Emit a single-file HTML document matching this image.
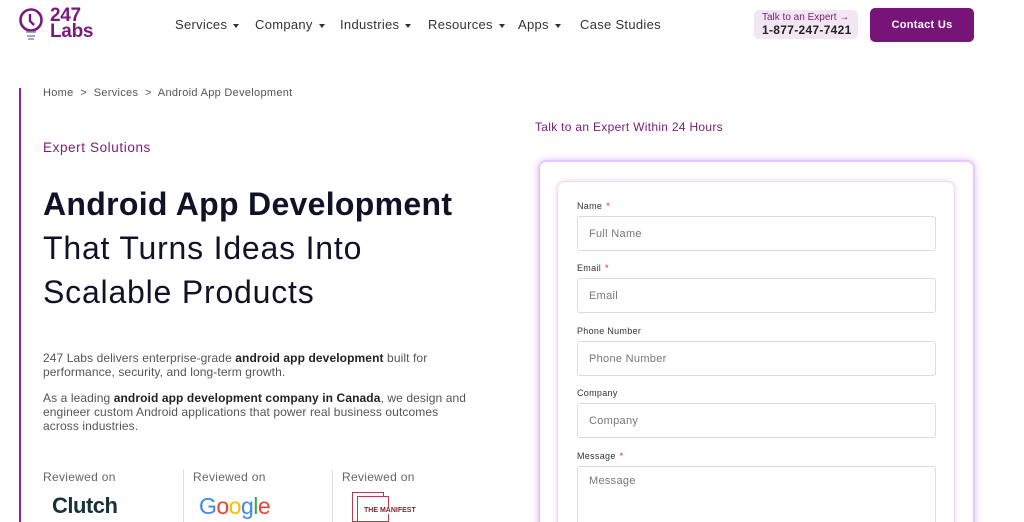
<!DOCTYPE html>
<html><head><meta charset="utf-8"><style>
*{margin:0;padding:0;box-sizing:border-box}
html,body{width:1024px;height:522px;overflow:hidden}
body{background:#fff;font-family:"Liberation Sans",Arial,sans-serif;position:relative;color:#222;letter-spacing:.3px}
.a{position:absolute;white-space:nowrap}
.nav{font-size:13px;color:#333;top:17px}
.car{display:inline-block;border-left:3.5px solid transparent;border-right:3.5px solid transparent;border-top:4px solid #333;margin-left:6px;vertical-align:middle}
.lbl{font-size:9px;color:#333;left:577px}
.lbl b{color:#e02020;font-weight:normal;margin-left:4px}
.inp{left:577px;width:359px;height:35px;border:1px solid #ddd;border-radius:3px;font-size:11px;color:#777;padding:11px 11px}
.p{font-size:12px;color:#555;line-height:14px;left:43px;letter-spacing:.1px}
.p b{color:#222}
.rev{font-size:12px;color:#666;top:470px}
</style></head><body>
<svg class="a" style="left:18px;top:8px" width="28" height="34" viewBox="0 0 28 34"><circle cx="13" cy="12" r="10.5" fill="none" stroke="#7b1a7b" stroke-width="2.6"/><path d="M12 6v7l4 4" fill="none" stroke="#7b1a7b" stroke-width="2.4"/><path d="M8 24h10M9 28h8M10 31h6" stroke="#8a8aa0" stroke-width="1.6"/></svg>
<div class="a" style="left:50px;top:8px;font-size:19px;font-weight:bold;color:#7b1a7b;line-height:16px;letter-spacing:-0.3px">247<br>Labs</div>
<div class="a nav" style="left:175px">Services<span class="car"></span></div>
<div class="a nav" style="left:255px">Company<span class="car"></span></div>
<div class="a nav" style="left:340px">Industries<span class="car"></span></div>
<div class="a nav" style="left:428px">Resources<span class="car"></span></div>
<div class="a nav" style="left:518px">Apps<span class="car"></span></div>
<div class="a nav" style="left:580px">Case Studies</div>
<div class="a" style="left:754px;top:10px;width:104px;height:29px;background:#f3e6f3;border-radius:5px"></div>
<div class="a" style="left:762px;top:12px;font-size:10px;color:#7b1a7b;letter-spacing:0">Talk to an Expert →</div>
<div class="a" style="left:762px;top:23px;font-size:12px;color:#222;font-weight:bold;letter-spacing:.3px">1-877-247-7421</div>
<div class="a" style="left:870px;top:8px;width:104px;height:34px;background:#761577;border-radius:5px;color:#fff;font-size:11px;font-weight:bold;text-align:center;line-height:34px">Contact Us</div>
<div class="a" style="left:19px;top:88px;width:2px;height:434px;background:#8a2a8a"></div>
<div class="a" style="left:43px;top:87px;font-size:11px;color:#555;letter-spacing:.3px">Home &nbsp;&gt;&nbsp; Services &nbsp;&gt;&nbsp; Android App Development</div>
<div class="a" style="left:43px;top:140px;font-size:13.5px;color:#7b1a7b;letter-spacing:.6px">Expert Solutions</div>
<div class="a" style="left:43px;top:186px;font-size:32px;font-weight:bold;color:#111128;letter-spacing:0.3px">Android App Development</div>
<div class="a" style="left:43px;top:226px;font-size:32px;color:#111128;line-height:44px;letter-spacing:.8px">That Turns Ideas Into<br>Scalable Products</div>
<div class="a p" style="top:351px">247 Labs delivers enterprise-grade <b>android app development</b> built for<br>performance, security, and long-term growth.</div>
<div class="a p" style="top:391px">As a leading <b>android app development company in Canada</b>, we design and<br>engineer custom Android applications that power real business outcomes<br>across industries.</div>
<div class="a rev" style="left:43px">Reviewed on</div>
<div class="a rev" style="left:193px">Reviewed on</div>
<div class="a rev" style="left:342px">Reviewed on</div>
<div class="a" style="left:183px;top:470px;width:1px;height:52px;background:#ddd"></div>
<div class="a" style="left:332px;top:470px;width:1px;height:52px;background:#ddd"></div>
<div class="a" style="left:52px;top:493px;font-size:22px;font-weight:bold;color:#17313b;letter-spacing:-0.5px">Clutch</div>
<div class="a" style="left:199px;top:493px;font-size:23px;letter-spacing:-0.5px"><span style="color:#4285f4">G</span><span style="color:#ea4335">o</span><span style="color:#fbbc05">o</span><span style="color:#4285f4">g</span><span style="color:#34a853">l</span><span style="color:#ea4335">e</span></div>
<div class="a" style="left:352px;top:492px;width:32px;height:30px;border:1.5px solid #b04050"></div>
<div class="a" style="left:357px;top:496px;width:32px;height:26px;border:1.5px solid #b04050;background:#fff"></div>
<div class="a" style="left:364px;top:507px;font-size:7px;font-weight:bold;color:#8a2030;background:#fff;letter-spacing:0">THE MANIFEST</div>
<div class="a" style="left:535px;top:120px;font-size:12px;color:#7b1a7b;letter-spacing:.3px">Talk to an Expert Within 24 Hours</div>
<div class="a" style="left:538px;top:160px;width:437px;height:380px;border:2px solid #e8c8f8;border-radius:8px;box-shadow:0 0 8px #e4bff8"></div>
<div class="a" style="left:557px;top:181px;width:398px;height:360px;border:1px solid #eadcf3;border-radius:8px;box-shadow:0 0 6px #ecd4f8"></div>
<div class="a lbl" style="top:201px">Name<b>*</b></div>
<div class="a inp" style="top:216px">Full Name</div>
<div class="a lbl" style="top:263px">Email<b>*</b></div>
<div class="a inp" style="top:278px">Email</div>
<div class="a lbl" style="top:326px">Phone Number</div>
<div class="a inp" style="top:341px">Phone Number</div>
<div class="a lbl" style="top:388px">Company</div>
<div class="a inp" style="top:403px">Company</div>
<div class="a lbl" style="top:451px">Message<b>*</b></div>
<div class="a inp" style="top:466px;height:70px;padding-top:8px">Message</div>
</body></html>
